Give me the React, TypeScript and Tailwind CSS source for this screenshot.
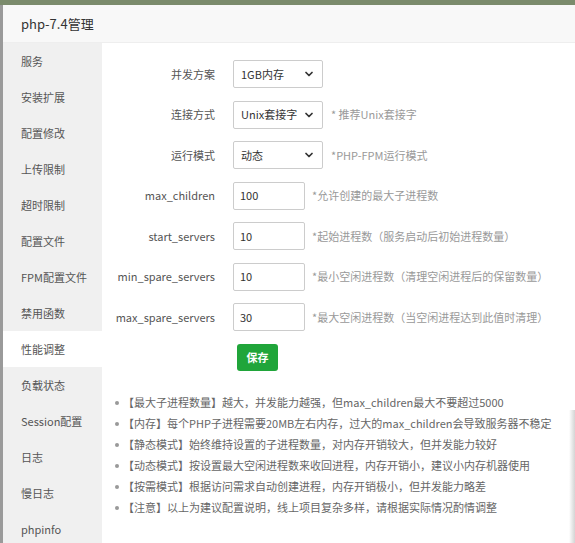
import { ChevronDown } from "lucide-react";

const menu = [
  "服务",
  "安装扩展",
  "配置修改",
  "上传限制",
  "超时限制",
  "配置文件",
  "FPM配置文件",
  "禁用函数",
  "性能调整",
  "负载状态",
  "Session配置",
  "日志",
  "慢日志",
  "phpinfo",
];

const selectRows = [
  { label: "并发方案", value: "1GB内存", hint: "" },
  { label: "连接方式", value: "Unix套接字", hint: "* 推荐Unix套接字" },
  { label: "运行模式", value: "动态", hint: "*PHP-FPM运行模式" },
];

const inputRows = [
  { label: "max_children", value: "100", hint: "*允许创建的最大子进程数" },
  { label: "start_servers", value: "10", hint: "*起始进程数（服务启动后初始进程数量）" },
  { label: "min_spare_servers", value: "10", hint: "*最小空闲进程数（清理空闲进程后的保留数量）" },
  { label: "max_spare_servers", value: "30", hint: "*最大空闲进程数（当空闲进程达到此值时清理）" },
];

const tips = [
  "【最大子进程数量】越大，并发能力越强，但max_children最大不要超过5000",
  "【内存】每个PHP子进程需要20MB左右内存，过大的max_children会导致服务器不稳定",
  "【静态模式】始终维持设置的子进程数量，对内存开销较大，但并发能力较好",
  "【动态模式】按设置最大空闲进程数来收回进程，内存开销小，建议小内存机器使用",
  "【按需模式】根据访问需求自动创建进程，内存开销极小，但并发能力略差",
  "【注意】以上为建议配置说明，线上项目复杂多样，请根据实际情况酌情调整",
];

export default function App() {
  return (
    <div
      className="relative h-[543px] w-[575px] overflow-hidden bg-[#9a9a9a]"
      style={{ fontFamily: '"Noto Sans CJK SC", "Noto Sans", sans-serif' }}
    >
      {/* page behind the layer */}
      <div className="absolute left-0 top-0 h-[5px] w-full bg-[#7b8b6c]" />

      <div className="absolute left-[3px] top-[5px] h-[560px] w-[600px] bg-white">
        <div className="flex h-[38px] items-center border-b border-[#eeeeee] bg-[#f8f8f8] pl-[18px] text-[13px] text-[#333]">
          php-7.4管理
        </div>

        <div className="flex">
          <div className="w-[99px] bg-[#f0f0f0]">
            {menu.map((m) => (
              <div
                key={m}
                className={
                  "flex h-[36px] items-center pl-[18px] text-[11px] text-[#555] " +
                  (m === "性能调整" ? "bg-white" : "")
                }
              >
                {m}
              </div>
            ))}
          </div>

          <div className="flex-1 pt-[17px] text-[11px]">
            <div className="flex flex-col gap-[12.5px]">
              {selectRows.map((r) => (
                <div key={r.label} className="flex items-center">
                  <div className="w-[113px] text-right text-[#555]">{r.label}</div>
                  <div className="ml-[18px] flex h-[28px] w-[90px] items-center justify-between rounded-[2px] border border-[#cccccc] pl-[7px] pr-[7px] text-[#333]">
                    <span>{r.value}</span>
                    <ChevronDown size={12} strokeWidth={3.5} className="text-[#333]" />
                  </div>
                  {r.hint && <span className="ml-[8px] text-[#999]">{r.hint}</span>}
                </div>
              ))}
              {inputRows.map((r) => (
                <div key={r.label} className="flex items-center">
                  <div className="w-[113px] text-right text-[#555]">{r.label}</div>
                  <div className="ml-[18px] flex h-[28px] w-[72px] items-center rounded-[2px] border border-[#cccccc] pl-[6px] text-[#333]">
                    {r.value}
                  </div>
                  <span className="ml-[7px] text-[#999]">{r.hint}</span>
                </div>
              ))}
            </div>

            <div className="ml-[135px] mt-[13px] flex h-[27px] w-[41px] items-center justify-center rounded-[3px] bg-[#20a53a] font-bold text-white">
              保存
            </div>

            <ul className="ml-[13px] mt-[21px] flex flex-col text-[#666]">
              {tips.map((t) => (
                <li key={t} className="flex h-[21px] items-center whitespace-nowrap">
                  <span className="mr-[4px] h-[4px] w-[4px] rounded-full bg-[#999]" />
                  {t}
                </li>
              ))}
            </ul>
          </div>
        </div>
      </div>

      {/* shadow of the layer beneath on the right */}
      <div className="absolute right-0 top-[410px] h-[140px] w-[6px] bg-gradient-to-r from-white to-[#d4d4d4]" />
    </div>
  );
}
